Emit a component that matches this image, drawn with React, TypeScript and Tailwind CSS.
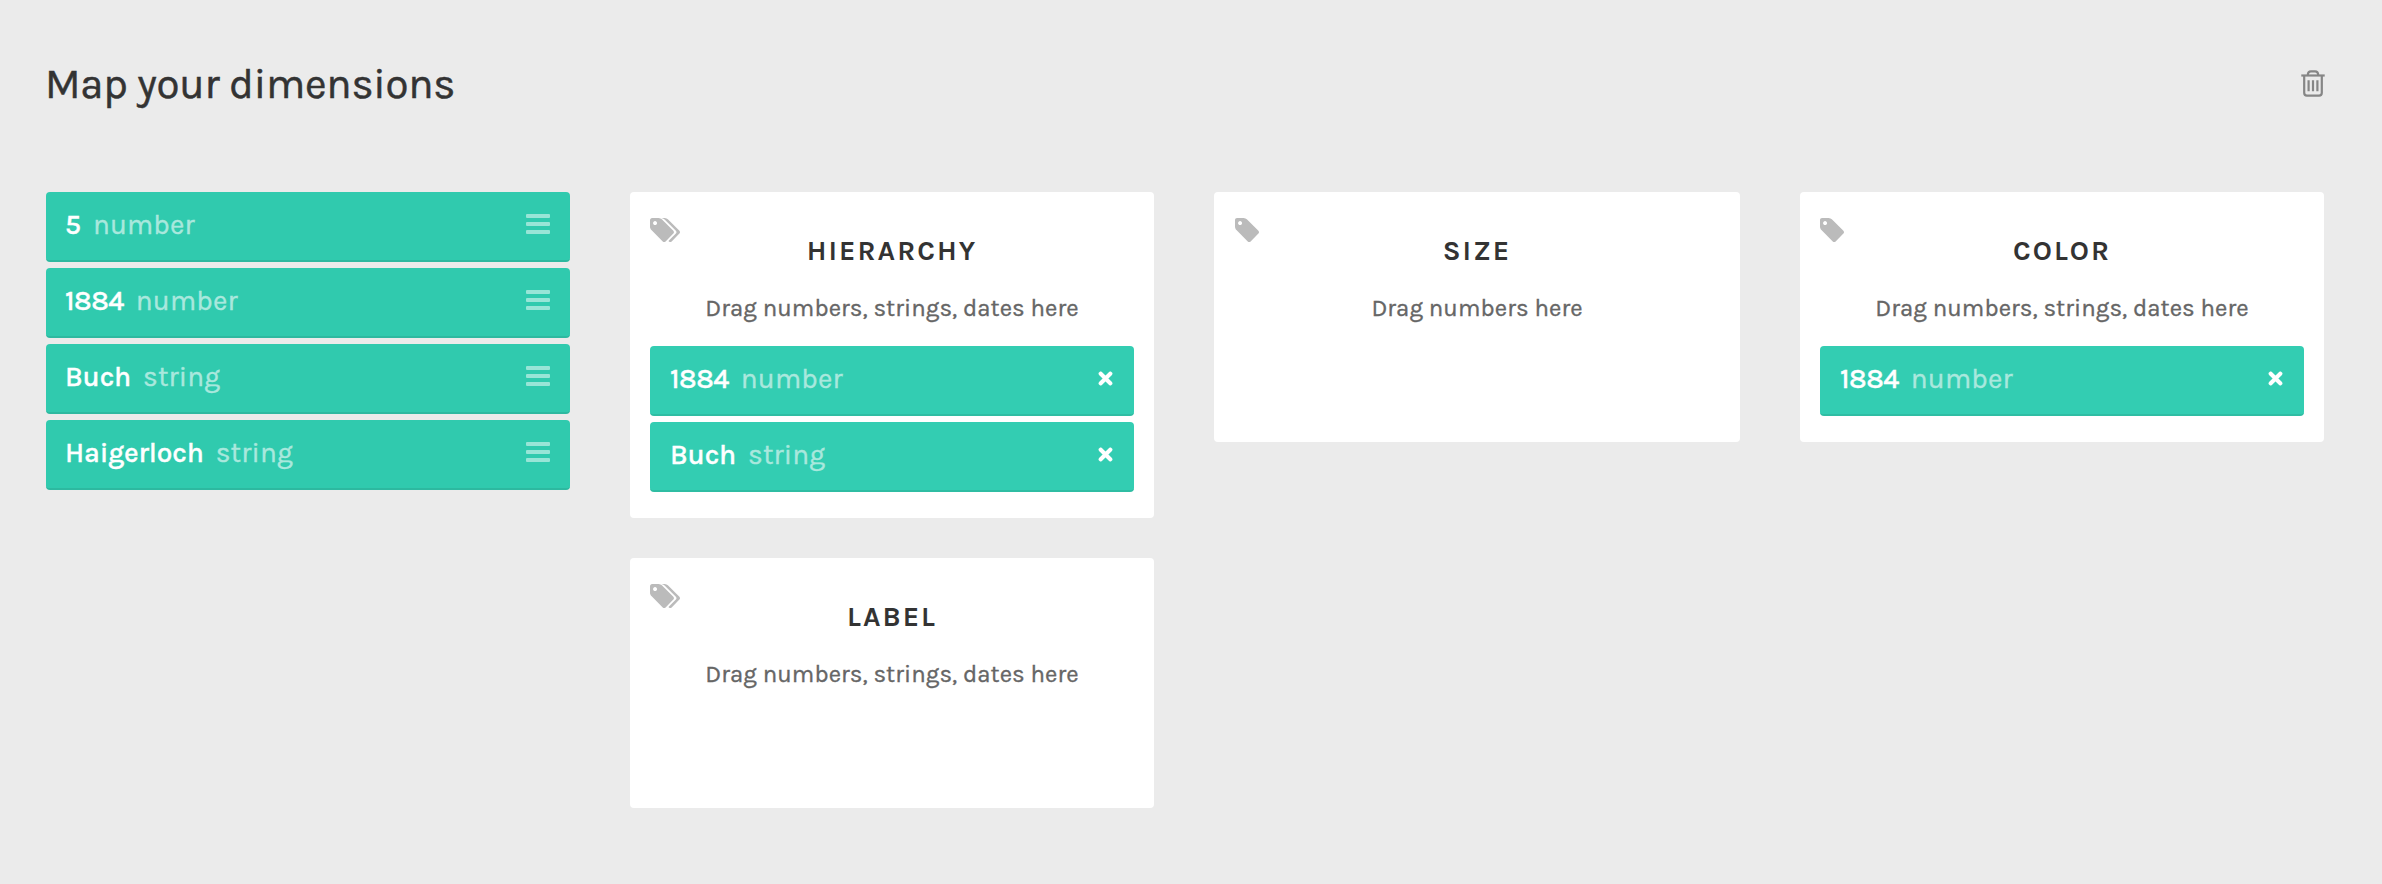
type Field = { name: string; type: "number" | "string" };

const fields: Field[] = [
  { name: "5", type: "number" },
  { name: "1884", type: "number" },
  { name: "Buch", type: "string" },
  { name: "Haigerloch", type: "string" },
];

const TAG_PATH =
  "M384 448q0-53-37.5-90.5t-90.5-37.5-90.5 37.5-37.5 90.5 37.5 90.5 90.5 37.5 90.5-37.5 37.5-90.5zm1067 576q0 53-37 90l-491 492q-39 37-91 37-53 0-90-37l-715-716q-38-37-64.5-101t-26.5-117v-416q0-52 38-90t90-38h416q53 0 117 26.5t102 64.5l715 714q37 39 37 91z";
const SECOND_TAG_PATH =
  "m384 0q0 53-37 90l-491 492q-39 37-91 37-36 0-59-14t-53-45l470-470q37-37 37-90 0-52-37-91l-715-714q-38-38-102-64.5t-117-26.5h224q53 0 117 26.5t102 64.5l715 714q37 39 37 91z";

function TagIcon() {
  return (
    <svg className="h-6 w-6" viewBox="-64 128 1515 1515" fill="currentColor">
      <path d={TAG_PATH} />
    </svg>
  );
}

function TagsIcon() {
  return (
    <svg className="h-6 w-[30px]" viewBox="-64 128 1899 1515" fill="currentColor">
      <path d={TAG_PATH + SECOND_TAG_PATH} />
    </svg>
  );
}

function CloseIcon() {
  return (
    <svg className="mt-[25px] mr-[21px] size-[15px]" viewBox="0 0 15 15" stroke="#fff" strokeWidth="3">
      <path d="M1.3 1.3L13.7 13.7M13.7 1.3L1.3 13.7" />
      <path d="M2 2L13 13M13 2L2 13" strokeWidth="4.1" />
    </svg>
  );
}

function GripIcon() {
  return (
    <svg className="mt-[22px] mr-5 h-5 w-6" viewBox="0 0 24 20" fill="#fff" fillOpacity="0.5">
      <rect width="24" height="4" rx="1" />
      <rect y="8" width="24" height="4" rx="1" />
      <rect y="16" width="24" height="4" rx="1" />
    </svg>
  );
}

function TrashIcon() {
  return (
    <svg className="h-[27px] w-6" viewBox="0 0 24 27" fill="none" stroke="#868686" strokeWidth="2.2">
      <path d="M0.3 5.5H23.7" />
      <path d="M6.8 5.2C6.8 2.5 8 1.3 10 1.3h4c2 0 3.2 1.2 3.2 3.9" />
      <path d="M3.2 6v16.8c0 2 .9 2.8 2.7 2.8h12.2c1.8 0 2.7-.8 2.7-2.8V6" />
      <path d="M7.6 10.3v11M12 10.3v11M16.4 10.3v11" />
    </svg>
  );
}

function Row({ field, removable = false }: { field: Field; removable?: boolean }) {
  return (
    <div
      className={`flex h-[70px] items-start justify-between rounded-[4px] border-b-2 text-[28px] leading-[65px] ${
        removable ? "border-[#2fbda3] bg-[#33cdb2] pl-5" : "border-[#2db9a0] bg-[#30caae] pl-[19px]"
      }`}
    >
      <div className="flex">
        <span
          className={`font-medium text-white [-webkit-text-stroke:0.4px] ${
            field.name === "1884" ? "tracking-[-0.5px]" : "tracking-[-0.15px]"
          }`}
        >
          {field.name}
        </span>
        <span className="ml-3 font-normal tracking-[0.12px] text-[#a9e8dd] [-webkit-text-stroke:0.4px]">
          {field.type}
        </span>
      </div>
      {removable ? <CloseIcon /> : <GripIcon />}
    </div>
  );
}

type ZoneProps = {
  title: string;
  hint: string;
  iconClass?: string;
  multiple?: boolean;
  values?: Field[];
};

function DropZone({ title, hint, iconClass = "left-5", multiple = false, values = [] }: ZoneProps) {
  return (
    <section className="relative rounded-[4px] bg-white px-5 pt-[38px] pb-[26px]">
      <div className={`absolute top-[26px] text-[#bbb] ${iconClass}`}>{multiple ? <TagsIcon /> : <TagIcon />}</div>
      <h2 className="text-center text-[28px] leading-[41px] font-bold tracking-[2.05px] text-[#333]">{title}</h2>
      <p className="mt-[17px] text-center text-[24px] leading-10 tracking-[0.08px] text-[#666] [-webkit-text-stroke:0.35px]">
        {hint}
      </p>
      <div className="mt-[18px] flex min-h-[70px] flex-col gap-1.5">
        {values.map((v) => (
          <Row key={v.name} field={v} removable />
        ))}
      </div>
    </section>
  );
}

export default function App() {
  return (
    <main className="h-[884px] w-[2382px] bg-[#ebebeb] pt-[59px] pr-[57px] pl-[46px] font-['Karla','Open_Sans',sans-serif]">
      <header className="mb-[83px] flex h-[50px] items-start justify-between">
        <h1 className="-ml-px text-[42px] leading-[50px] tracking-[-0.25px] text-[#333] [-webkit-text-stroke:0.5px]">
          Map your dimensions
        </h1>
        <button className="mt-[11px]" aria-label="Clear">
          <TrashIcon />
        </button>
      </header>
      <div className="grid grid-cols-[524px_524px_526px_524px] items-start gap-[60px]">
        <div className="flex flex-col gap-1.5">
          {fields.map((f) => (
            <Row key={f.name} field={f} />
          ))}
        </div>
        <div className="flex flex-col gap-10">
          <DropZone
            title="HIERARCHY"
            hint="Drag numbers, strings, dates here"
            multiple
            values={[fields[1], fields[2]]}
          />
          <DropZone title="LABEL" hint="Drag numbers, strings, dates here" multiple />
        </div>
        <DropZone title="SIZE" hint="Drag numbers here" iconClass="left-[21px]" />
        <DropZone title="COLOR" hint="Drag numbers, strings, dates here" values={[fields[1]]} />
      </div>
    </main>
  );
}
